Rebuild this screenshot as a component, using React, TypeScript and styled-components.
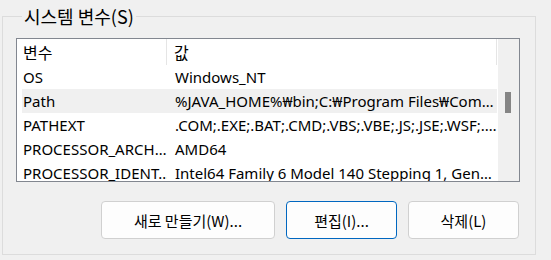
import React from "react";
import styled, { createGlobalStyle } from "styled-components";

const Global = createGlobalStyle`
  html, body { margin: 0; padding: 0; background: #f0f0f0; }
  body {
    font-family: "Noto Sans", "Noto Sans CJK KR", sans-serif;
    font-size: 15px;
    color: #000;
  }
`;

const Page = styled.div`
  width: 551px;
  height: 260px;
  box-sizing: border-box;
  padding: 5px 15px 0 2px;
  overflow: hidden;
`;

const Group = styled.fieldset`
  margin: 0;
  width: 534px;
  height: 250px;
  box-sizing: border-box;
  border: 1px solid #dcdcdc;
  padding: 0 15px 0 13px;
  display: flex;
  flex-direction: column;
`;

const Legend = styled.legend`
  margin-left: 6px;
  padding: 0 2px;
  font-size: 18px;
  line-height: 22px;
  font-family: "Noto Sans CJK KR", sans-serif;
`;

const ListBox = styled.div`
  margin-top: 11px;
  width: 504px;
  height: 144px;
  box-sizing: border-box;
  border: 1px solid #828790;
  background: #fff;
  display: flex;
  overflow: hidden;
`;

const ListBody = styled.div`
  flex: 1;
  display: flex;
  flex-direction: column;
  padding-left: 5px;
  min-width: 0;
`;

const Header = styled.div`
  height: 26px;
  display: grid;
  grid-template-columns: 145px 330px;
  flex-shrink: 0;
`;

const HeaderCell = styled.div`
  padding-left: 1px;
  display: flex;
  align-items: center;
  font-family: "Noto Sans CJK KR", sans-serif;
  font-size: 16px;
  border-right: 1px solid #e5e5e5;
  box-sizing: border-box;
  height: 26px;
  &:last-child { padding-left: 7px; }
`;

const Row = styled.div<{ $selected?: boolean }>`
  height: 24px;
  flex-shrink: 0;
  display: grid;
  grid-template-columns: 145px 330px;
  align-items: center;
  background: ${(p) => (p.$selected ? "#f0f0f0" : "transparent")};
  width: 475px;
`;

const Cell = styled.div`
  white-space: nowrap;
  overflow: hidden;
  padding-left: 1px;
  &:last-child { padding-left: 8px; }
`;

const ScrollBar = styled.div`
  width: 21px;
  background: #f0f0f0;
  position: relative;
  flex-shrink: 0;
`;

const Thumb = styled.div`
  position: absolute;
  left: 7px;
  top: 53px;
  width: 6px;
  height: 21px;
  background: #858585;
`;

const Buttons = styled.div`
  margin-top: 19px;
  display: flex;
  justify-content: flex-end;
  gap: 11px;
  padding-right: 1px;
`;

const Button = styled.button<{ $w: number; $default?: boolean }>`
  width: ${(p) => p.$w}px;
  height: 38px;
  box-sizing: border-box;
  border-radius: 4px;
  border: 1px solid ${(p) => (p.$default ? "#0067c0" : "#d0d0d0")};
  background: #fdfdfd;
  font-family: "Noto Sans CJK KR", "Noto Sans", sans-serif;
  font-size: 15px;
  color: #000;
  padding: 0;
`;

const rows = [
  ["OS", "Windows_NT"],
  ["Path", "%JAVA_HOME%₩bin;C:₩Program Files₩Com…"],
  ["PATHEXT", ".COM;.EXE;.BAT;.CMD;.VBS;.VBE;.JS;.JSE;.WSF;.…"],
  ["PROCESSOR_ARCH…", "AMD64"],
  ["PROCESSOR_IDENT…", "Intel64 Family 6 Model 140 Stepping 1, Gen…"],
];

export default function App() {
  return (
    <Page>
      <Global />
      <Group>
        <Legend>시스템 변수(S)</Legend>
        <ListBox>
          <ListBody>
            <Header>
              <HeaderCell>변수</HeaderCell>
              <HeaderCell>값</HeaderCell>
            </Header>
            {rows.map(([k, v]) => (
              <Row key={k} $selected={k === "Path"}>
                <Cell>{k}</Cell>
                <Cell>{v}</Cell>
              </Row>
            ))}
          </ListBody>
          <ScrollBar>
            <Thumb />
          </ScrollBar>
        </ListBox>
        <Buttons>
          <Button $w={174}>새로 만들기(W)...</Button>
          <Button $w={111} $default>편집(I)...</Button>
          <Button $w={111}>삭제(L)</Button>
        </Buttons>
      </Group>
    </Page>
  );
}
